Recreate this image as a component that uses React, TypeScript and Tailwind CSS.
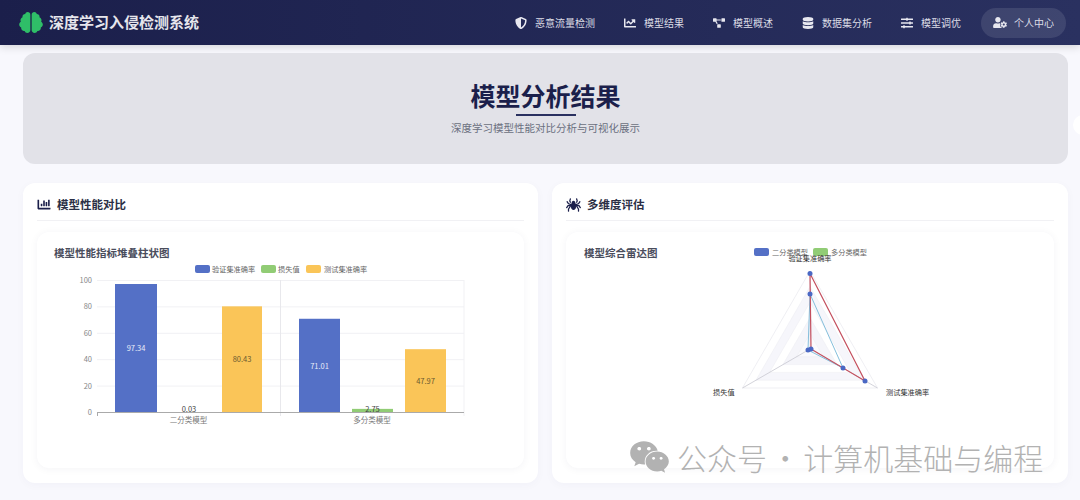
import { FaBrain, FaChartBar, FaChartLine, FaDatabase, FaProjectDiagram, FaShieldAlt, FaSlidersH, FaSpider, FaUserCog, FaWeixin } from 'react-icons/fa';

const font = { fontFamily: '"Noto Sans CJK SC", "Noto Sans", sans-serif' };

const navItems = [
    { icon: FaShieldAlt, label: '恶意流量检测' },
    { icon: FaChartLine, label: '模型结果' },
    { icon: FaProjectDiagram, label: '模型概述' },
    { icon: FaDatabase, label: '数据集分析' },
    { icon: FaSlidersH, label: '模型调优' },
];

const bars = [
    { x: 115, w: 42, value: 97.34, fill: '#5470c6', text: '#e8ecf8' },
    { x: 168, w: 42, value: 0.03, fill: '#91cc75', text: '#444' },
    { x: 222, w: 40, value: 80.43, fill: '#fac558', text: '#6b5a30' },
    { x: 299, w: 41, value: 71.01, fill: '#5470c6', text: '#e8ecf8' },
    { x: 352, w: 41, value: 2.75, fill: '#91cc75', text: '#444' },
    { x: 405, w: 41, value: 47.97, fill: '#fac558', text: '#6b5a30' },
];

const BarChart = () => {
    const y0 = 412.5;
    const k = 1.32;
    return (
        <svg viewBox="37 262 487 206" className="block w-full h-[206px]" style={font}>
            {/* legend */}
            <rect x="195" y="265" width="15" height="8" rx="2" fill="#5470c6" />
            <text x="212" y="271.5" fontSize="7.2" fill="#666">验证集准确率</text>
            <rect x="261" y="265" width="15" height="8" rx="2" fill="#91cc75" />
            <text x="278" y="271.5" fontSize="7.2" fill="#666">损失值</text>
            <rect x="306" y="265" width="15" height="8" rx="2" fill="#fac558" />
            <text x="324" y="271.5" fontSize="7.2" fill="#666">测试集准确率</text>

            {/* grid */}
            {[0, 20, 40, 60, 80, 100].map((v) => (
                <g key={v}>
                    {v > 0 && <line x1="97" x2="464" y1={y0 - v * k} y2={y0 - v * k} stroke="#f1f1f4" strokeWidth="1" />}
                    <text x="92" y={y0 - v * k + 2.5} fontSize="7.5" fill="#888" textAnchor="end">{v}</text>
                </g>
            ))}
            <line x1="280.5" x2="280.5" y1="280" y2="416" stroke="#e8e8ec" />
            <line x1="464" x2="464" y1="280" y2="416" stroke="#f1f1f4" />

            {bars.map((b) => (
                <rect key={b.x} x={b.x} y={y0 - b.value * k} width={b.w} height={b.value * k} fill={b.fill} />
            ))}
            <line x1="97" x2="464" y1={y0} y2={y0} stroke="#aaa" />
            <line x1="97.5" x2="97.5" y1={y0} y2="416" stroke="#aaa" />
            {bars.map((b) => (
                <text
                    key={b.x}
                    x={b.x + b.w / 2}
                    y={b.value < 5 ? y0 - 0.5 : y0 - (b.value * k) / 2 + 3}
                    fontSize="7.5"
                    fill={b.text}
                    textAnchor="middle"
                >
                    {b.value.toFixed(2)}
                </text>
            ))}
            <text x="188.5" y="423" fontSize="7.5" fill="#777" textAnchor="middle">二分类模型</text>
            <text x="372" y="423" fontSize="7.5" fill="#777" textAnchor="middle">多分类模型</text>
        </svg>
    );
};

const tri = (r: number) => {
    const cx = 810;
    const cy = 349;
    const dx = r * 0.866;
    return `${cx},${cy - r} ${cx + dx},${cy + r / 2} ${cx - dx},${cy + r / 2}`;
};

const RadarChart = () => (
    <svg viewBox="566 232 488 236" className="block w-full h-[236px]" style={font}>
        {/* legend */}
        <rect x="754" y="248" width="15" height="8" rx="2" fill="#5470c6" />
        <text x="772" y="254.5" fontSize="7.2" fill="#666">二分类模型</text>
        <rect x="813" y="248" width="15" height="8" rx="2" fill="#91cc75" />
        <text x="831" y="254.5" fontSize="7.2" fill="#666">多分类模型</text>

        {/* rings */}
        <polygon points={tri(78)} fill="#ffffff" stroke="#ebebf0" strokeWidth="0.8" />
        <polygon points={tri(62.4)} fill="#f6f6fb" stroke="#eeeef3" strokeWidth="0.6" />
        <polygon points={tri(46.8)} fill="#ffffff" stroke="#eeeef3" strokeWidth="0.6" />
        <polygon points={tri(31.2)} fill="#f5f5fa" stroke="#eeeef3" strokeWidth="0.6" />
        <polygon points={tri(15.6)} fill="#fafafd" stroke="#eeeef3" strokeWidth="0.6" />
        <line x1="810" y1="349" x2="810" y2="271" stroke="#e0e0e6" strokeWidth="0.7" />
        <line x1="810" y1="349" x2="742.5" y2="388" stroke="#c8c8d0" strokeWidth="0.8" />
        <line x1="810" y1="349" x2="877.5" y2="388" stroke="#c8c8d0" strokeWidth="0.8" />

        <polygon points="810,294 843,368 808,350" fill="none" stroke="#85bfdc" strokeWidth="1" />
        <polygon points="810,273.5 865,381 811,349" fill="none" stroke="#c4505f" strokeWidth="1.2" />
        {[[810, 273.5], [865, 381], [811, 349], [810, 294], [843, 368], [808, 350]].map(([x, y]) => (
            <circle key={`${x}-${y}`} cx={x} cy={y} r="2.5" fill="#4a68c4" />
        ))}

        <text x="810" y="261" fontSize="7.2" fill="#333" textAnchor="middle">验证集准确率</text>
        <text x="713" y="395" fontSize="7.2" fill="#333">损失值</text>
        <text x="886" y="395" fontSize="7.2" fill="#333">测试集准确率</text>
    </svg>
);

const App = () => {
    return (
        <div className="relative w-[1080px] h-[500px] overflow-hidden bg-[#f8f8fd]" style={font}>
            <header className="h-[45px] flex items-center justify-between pl-[19px] pr-[14px] bg-gradient-to-r from-[#1b1f4b] to-[#2a3160] shadow-[0_2px_8px_rgba(0,0,0,0.15)]">
                <div className="flex items-center gap-[6px]">
                    <FaBrain className="w-[24px] h-[21px] text-[#2fbe68]" />
                    <span className="text-[15px] font-bold text-[#e6e6ec]">深度学习入侵检测系统</span>
                </div>
                <nav className="flex items-center text-[10px] text-[#dcdde6]">
                    <div className="flex items-center gap-[29px]">
                        {navItems.map(({ icon: Icon, label }) => (
                            <div key={label} className="flex items-center gap-[8px]">
                                <Icon className="w-[12px] h-[12px] text-[#e8e8f0]" />
                                <span>{label}</span>
                            </div>
                        ))}
                    </div>
                    <div className="ml-[20px] h-[30px] w-[85px] rounded-full bg-white/10 flex items-center justify-center gap-[7px]">
                        <FaUserCog className="w-[14px] h-[11px] text-[#e8e8f0]" />
                        <span>个人中心</span>
                    </div>
                </nav>
            </header>

            <main className="pl-[23px] pt-[8px]">
                <section className="w-[1045px] h-[111px] rounded-[12px] bg-[#e2e2e8] flex flex-col items-center pt-[25px]">
                    <h1 className="text-[25px] leading-[34px] font-bold text-[#1b1f4b]">模型分析结果</h1>
                    <div className="w-[60px] h-[2px] mt-[2px] bg-[#2a3160]" />
                    <p className="mt-[4px] text-[10.5px] leading-[16px] text-[#6b7080]">深度学习模型性能对比分析与可视化展示</p>
                </section>

                <div className="mt-[19px] w-[1045px] grid grid-cols-[515px_516px] gap-[14px]">
                    <section className="h-[300px] rounded-[12px] bg-white px-[14px] shadow-[0_2px_10px_rgba(30,30,80,0.03)]">
                        <div className="h-[38px] flex items-center gap-[6px] border-b border-[#f1f1f4] pt-[6px]">
                            <FaChartBar className="w-[14px] h-[13px] text-[#1b1f4b]" />
                            <h2 className="text-[11.5px] font-bold text-[#2b2f45]">模型性能对比</h2>
                        </div>
                        <div className="mt-[11px] h-[236px] rounded-[12px] bg-white shadow-[0_1px_8px_rgba(30,30,80,0.05)]">
                            <h3 className="h-[30px] pl-[17px] pt-[13px] text-[10.5px] leading-[16px] font-bold text-[#4a4d5c]">模型性能指标堆叠柱状图</h3>
                            <BarChart />
                        </div>
                    </section>

                    <section className="h-[300px] rounded-[12px] bg-white px-[14px] shadow-[0_2px_10px_rgba(30,30,80,0.03)]">
                        <div className="h-[38px] flex items-center gap-[6px] border-b border-[#f1f1f4] pt-[6px]">
                            <FaSpider className="w-[15px] h-[14px] text-[#1b1f4b]" />
                            <h2 className="text-[11.5px] font-bold text-[#2b2f45]">多维度评估</h2>
                        </div>
                        <div className="relative mt-[11px] h-[236px] rounded-[12px] bg-white shadow-[0_1px_8px_rgba(30,30,80,0.05)]">
                            <h3 className="absolute left-[18px] top-[13px] text-[10.5px] leading-[16px] font-bold text-[#4a4d5c]">模型综合雷达图</h3>
                            <RadarChart />
                        </div>
                    </section>
                </div>
            </main>

            {/* page scroll handle on the right edge */}
            <div className="absolute left-[1073px] top-[115px] w-[20px] h-[20px] rounded-full bg-white" />

            {/* watermark */}
            <div className="absolute left-[629px] top-[437px] flex items-center gap-[7px] text-[#b2b2b2]">
                <FaWeixin className="w-[41px] h-[36px]" />
                <span className="text-[30px] font-light leading-[40px] whitespace-nowrap [word-spacing:-3.5px]">公众号 · 计算机基础与编程</span>
            </div>
        </div>
    );
};

export default App;
